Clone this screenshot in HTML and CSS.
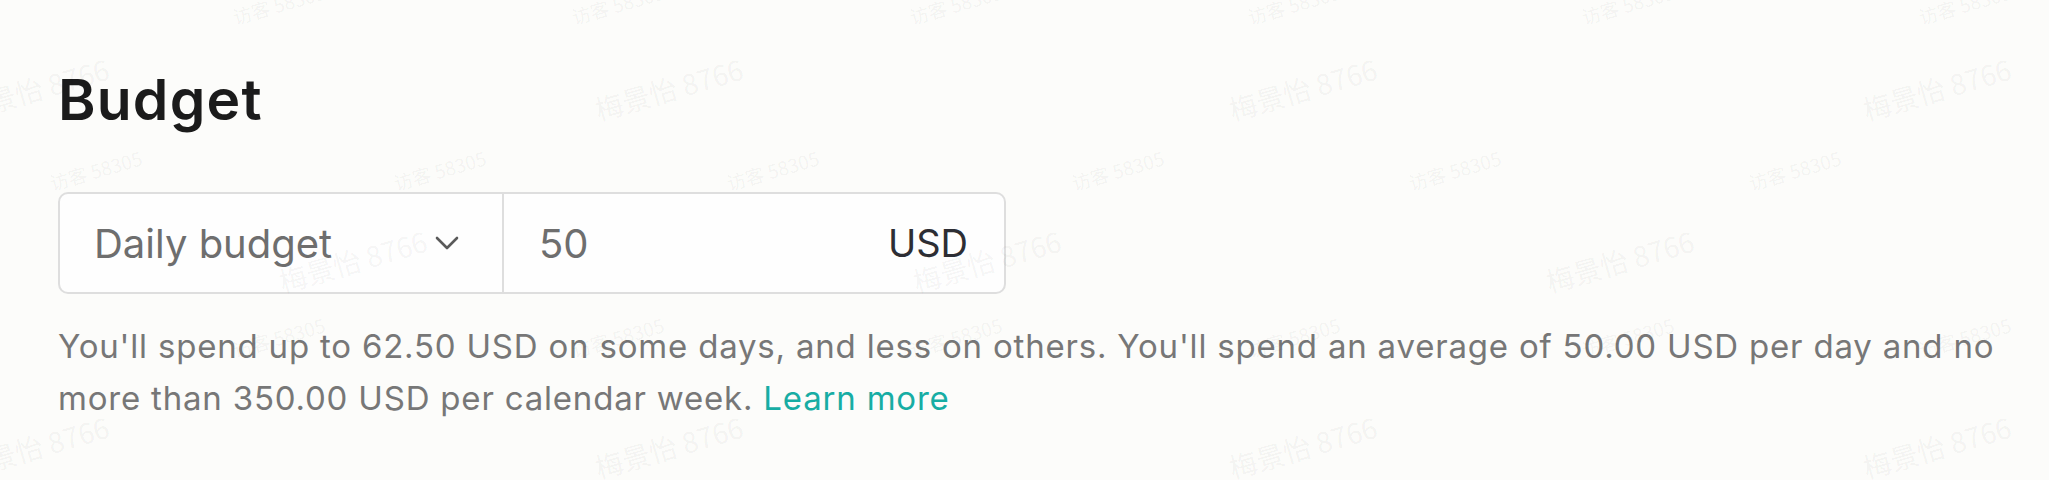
FILE: index.html
```html
<!DOCTYPE html>
<html lang="en">
<head>
<meta charset="utf-8">
<title>Budget</title>
<link rel="stylesheet" href="styles.css">
</head>
<body>
<main class="page">
  <h2 class="title">Budget</h2>
  <div class="budget-field">
    <div class="type-select">
      <span class="type-label">Daily budget</span>
      <svg class="chevron" width="24" height="14" viewBox="0 0 24 14" aria-hidden="true">
        <path d="M2 2 L12 12 L22 2" fill="none" stroke="#5a5a5a" stroke-width="2.6" stroke-linecap="round" stroke-linejoin="round"/>
      </svg>
    </div>
    <div class="amount">
      <span class="amount-value">50</span>
      <span class="currency">USD</span>
    </div>
  </div>
  <p class="hint">You'll spend up to 62.50 USD on some days, and less on others. You'll spend an average of 50.00 USD per day and no more than 350.00 USD per calendar week. <a class="learn-more" href="#">Learn more</a></p>
</main>

<svg class="watermarks" width="2049" height="480" viewBox="0 0 2049 480" aria-hidden="true">
  <g class="wm-name">
    <text x="38" y="100" transform="rotate(-16 38 100)">梅景怡 8766</text>
    <text x="672" y="100" transform="rotate(-16 672 100)">梅景怡 8766</text>
    <text x="1306" y="100" transform="rotate(-16 1306 100)">梅景怡 8766</text>
    <text x="1940" y="100" transform="rotate(-16 1940 100)">梅景怡 8766</text>
    <text x="356" y="272" transform="rotate(-16 356 272)">梅景怡 8766</text>
    <text x="990" y="272" transform="rotate(-16 990 272)">梅景怡 8766</text>
    <text x="1623" y="272" transform="rotate(-16 1623 272)">梅景怡 8766</text>
    <text x="38" y="458" transform="rotate(-16 38 458)">梅景怡 8766</text>
    <text x="672" y="458" transform="rotate(-16 672 458)">梅景怡 8766</text>
    <text x="1306" y="458" transform="rotate(-16 1306 458)">梅景怡 8766</text>
    <text x="1940" y="458" transform="rotate(-16 1940 458)">梅景怡 8766</text>
  </g>
  <g class="wm-guest">
    <text x="281" y="12" transform="rotate(-16 281 12)">访客 58305</text>
    <text x="620" y="12" transform="rotate(-16 620 12)">访客 58305</text>
    <text x="958" y="12" transform="rotate(-16 958 12)">访客 58305</text>
    <text x="1296" y="12" transform="rotate(-16 1296 12)">访客 58305</text>
    <text x="1630" y="12" transform="rotate(-16 1630 12)">访客 58305</text>
    <text x="1967" y="12" transform="rotate(-16 1967 12)">访客 58305</text>
    <text x="98" y="178" transform="rotate(-16 98 178)">访客 58305</text>
    <text x="442" y="178" transform="rotate(-16 442 178)">访客 58305</text>
    <text x="775" y="178" transform="rotate(-16 775 178)">访客 58305</text>
    <text x="1120" y="178" transform="rotate(-16 1120 178)">访客 58305</text>
    <text x="1457" y="178" transform="rotate(-16 1457 178)">访客 58305</text>
    <text x="1797" y="178" transform="rotate(-16 1797 178)">访客 58305</text>
    <text x="281" y="345" transform="rotate(-16 281 345)">访客 58305</text>
    <text x="620" y="345" transform="rotate(-16 620 345)">访客 58305</text>
    <text x="958" y="345" transform="rotate(-16 958 345)">访客 58305</text>
    <text x="1296" y="345" transform="rotate(-16 1296 345)">访客 58305</text>
    <text x="1630" y="345" transform="rotate(-16 1630 345)">访客 58305</text>
    <text x="1967" y="345" transform="rotate(-16 1967 345)">访客 58305</text>
  </g>
</svg>
</body>
</html>
```

FILE: styles.css
```css
html, body {
  margin: 0;
  padding: 0;
  background: #fcfcfa;
}

body {
  position: relative;
  width: 2049px;
  height: 480px;
  overflow: hidden;
  font-family: Inter, "Liberation Sans", Arial, sans-serif;
}

.page {
  padding: 66px 30px 0 58px;
}

.title {
  margin: 0;
  font-size: 57px;
  line-height: 68px;
  font-weight: 600;
  color: #1b1b1b;
  letter-spacing: 1.2px;
}

.budget-field {
  margin-top: 58px;
  width: 948px;
  height: 102px;
  box-sizing: border-box;
  display: flex;
  border: 2px solid #dedede;
  border-radius: 10px;
  background: #fefefe;
}

.type-select {
  width: 444px;
  box-sizing: border-box;
  display: flex;
  align-items: center;
  justify-content: space-between;
  padding: 0 43px 0 34px;
  border-right: 2px solid #dedede;
}

.type-label,
.amount-value {
  font-size: 40px;
  color: #6e6e6e;
}

.chevron {
  display: block;
}

.amount {
  flex: 1;
  display: flex;
  align-items: center;
  justify-content: space-between;
  padding: 0 36px 0 35px;
}

.currency {
  font-size: 38px;
  color: #2d2e34;
}

.hint {
  margin: 26px 0 0;
  font-size: 33px;
  line-height: 52px;
  letter-spacing: 0.8px;
  color: #777777;
}

.learn-more {
  color: #17ada4;
  text-decoration: none;
}

.watermarks {
  position: absolute;
  left: 0;
  top: 0;
  pointer-events: none;
}

.watermarks text {
  font-family: "Noto Sans CJK SC", "Liberation Sans", sans-serif;
  text-anchor: middle;
  fill: rgba(0, 0, 0, 0.05);
}

.wm-name text {
  font-size: 28px;
}

.wm-guest text {
  font-size: 19px;
}
```
